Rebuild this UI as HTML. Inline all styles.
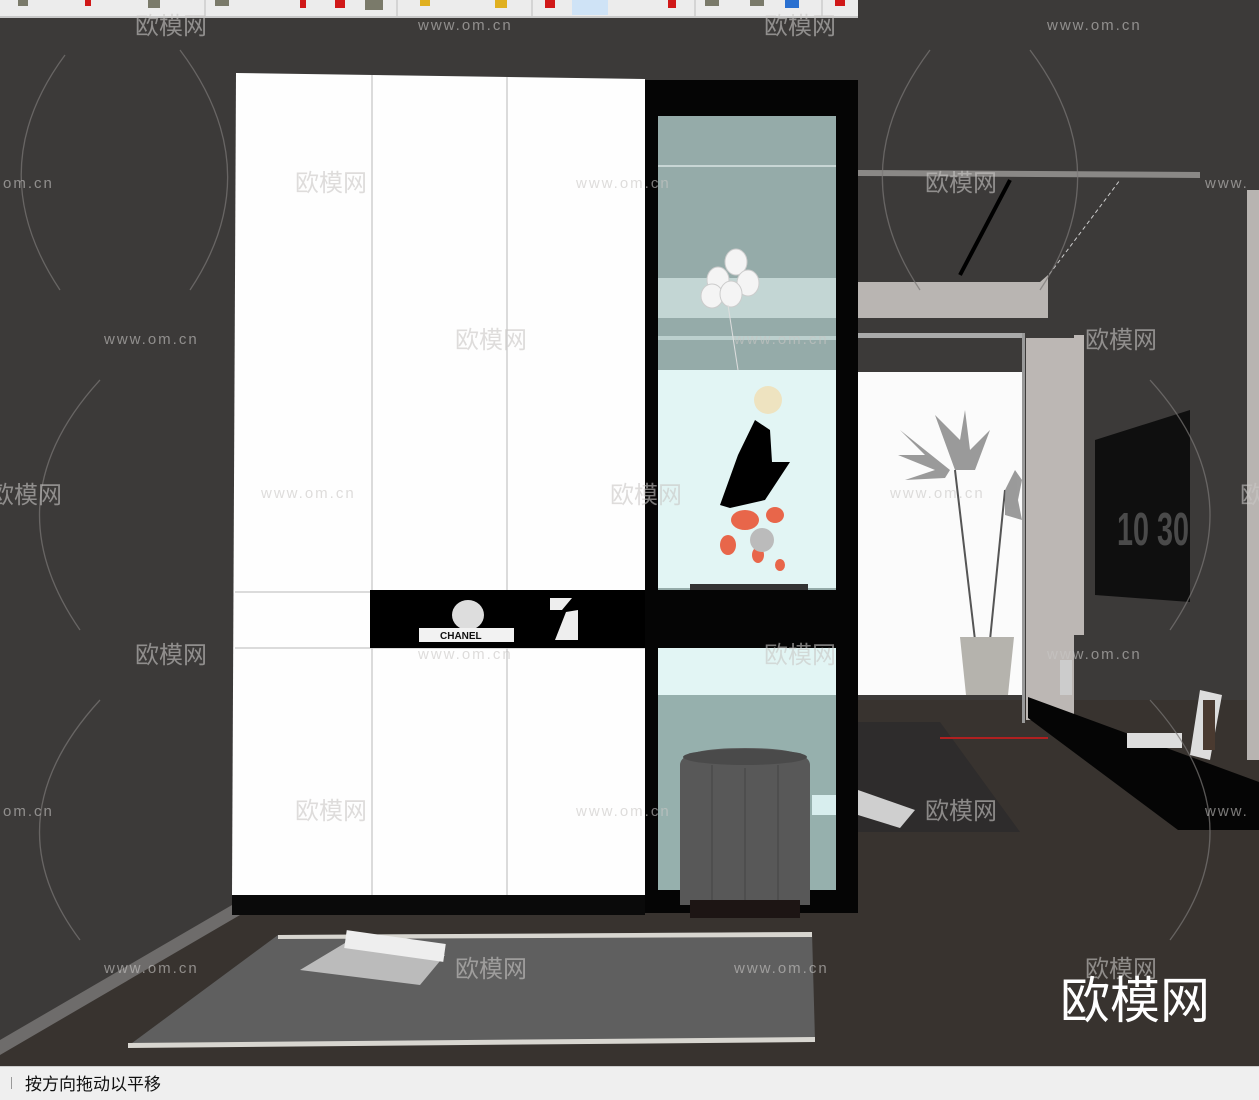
<!DOCTYPE html>
<html><head><meta charset="utf-8"><style>
html,body{margin:0;padding:0;width:1259px;height:1100px;overflow:hidden;background:#3c3a39}
svg{display:block}
text{font-family:"Liberation Sans","Noto Sans CJK SC",sans-serif}
</style></head><body>
<svg width="1259" height="1100" viewBox="0 0 1259 1100" xmlns="http://www.w3.org/2000/svg">
<rect x="0" y="0" width="1259" height="1100" fill="#3c3a39"/>
<polygon points="0,1050 232,905 645,905 858,700 1259,700 1259,1066 0,1066" fill="#38332f"/>
<polygon points="0,1040 232,905 240,915 0,1055" fill="#6e6c6b"/>
<rect x="0" y="0" width="858" height="17" fill="#ececec"/>
<rect x="0" y="16" width="858" height="2" fill="#c8c8c8"/>
<rect x="572" y="0" width="36" height="15" fill="#cfe3f6"/>
<g fill="#7a7a6a"><rect x="18" y="0" width="10" height="6"/><rect x="148" y="0" width="12" height="8"/><rect x="215" y="0" width="14" height="6"/><rect x="365" y="0" width="18" height="10"/><rect x="705" y="0" width="14" height="6"/><rect x="750" y="0" width="14" height="6"/></g>
<g fill="#d01818"><rect x="85" y="0" width="6" height="6"/><rect x="300" y="0" width="6" height="8"/><rect x="335" y="0" width="10" height="8"/><rect x="545" y="0" width="10" height="8"/><rect x="668" y="0" width="8" height="8"/><rect x="835" y="0" width="10" height="6"/></g>
<g fill="#e0b020"><rect x="420" y="0" width="10" height="6"/><rect x="495" y="0" width="12" height="8"/></g>
<rect x="785" y="0" width="14" height="8" fill="#2a70d0"/>
<g stroke="#bbb"><line x1="205" y1="0" x2="205" y2="16"/><line x1="397" y1="0" x2="397" y2="16"/><line x1="532" y1="0" x2="532" y2="16"/><line x1="695" y1="0" x2="695" y2="16"/><line x1="822" y1="0" x2="822" y2="16"/></g>

<polygon points="858,170 1200,172 1200,178 858,176" fill="#8a8886"/>
<line x1="960" y1="275" x2="1010" y2="180" stroke="#000" stroke-width="4"/>
<line x1="1045" y1="280" x2="1120" y2="180" stroke="#ccc" stroke-width="1" stroke-dasharray="4,3"/>
<polygon points="858,282 1040,282 1048,275 1048,318 858,318" fill="#b9b5b2"/>
<rect x="858" y="333" width="165" height="5" fill="#aaa"/>
<rect x="858" y="372" width="165" height="323" fill="#fbfbfb"/>
<rect x="1022" y="333" width="3" height="390" fill="#999"/>
<rect x="1026" y="338" width="48" height="382" fill="#bcb7b4"/>
<rect x="1074" y="335" width="10" height="300" fill="#bcb7b4"/>
<rect x="1247" y="190" width="12" height="570" fill="#b8b4b1"/>
<polygon points="1095,440 1190,410 1190,602 1095,595" fill="#0f0f0f"/>
<text x="1117" y="545" font-size="46" fill="#4a4a4a" font-weight="bold" textLength="72" lengthAdjust="spacingAndGlyphs">10 30</text>
<path d="M975,640 L955,470 M990,640 L1005,490" stroke="#555" stroke-width="2"/>
<g fill="#8a8a8a" opacity=".85">
<path d="M950,470 L900,430 L925,455 L898,455 L935,470 L905,480 L945,478 Z"/>
<path d="M955,470 L935,415 L960,440 L965,410 L970,450 L990,430 L975,470 Z"/>
<path d="M1005,490 L1015,470 L1022,480 L1018,500 L1022,520 L1005,515 Z"/>
</g>
<path d="M960,637 L1014,637 L1008,695 L966,695 Z" fill="#b5b3ad"/>
<polygon points="858,722 940,722 1020,832 858,832" fill="#2e2c2c"/>
<line x1="940" y1="738" x2="1048" y2="738" stroke="#b02020" stroke-width="2"/>
<polygon points="858,790 915,810 900,828 858,815" fill="#cfcfcf"/>
<polygon points="1028,697 1259,782 1259,830 1178,830 1028,718" fill="#050505"/>
<rect x="1060" y="660" width="12" height="35" fill="#ccc"/>
<polygon points="1200,690 1222,695 1210,760 1190,755" fill="#ddd"/>
<rect x="1203" y="700" width="12" height="50" fill="#4a3a30"/>
<rect x="1127" y="733" width="55" height="15" fill="#ddd"/>

<polygon points="236,73 645,79 645,895 232,895" fill="#fefefe"/>
<g stroke="#cfcfcf" stroke-width="1.5"><line x1="372" y1="75" x2="372" y2="895"/><line x1="507" y1="77" x2="507" y2="895"/><line x1="235" y1="592" x2="372" y2="592"/><line x1="235" y1="648" x2="645" y2="648"/></g>
<rect x="232" y="895" width="413" height="20" fill="#0a0a0a"/>
<rect x="370" y="590" width="487" height="58" fill="#000"/>
<ellipse cx="468" cy="615" rx="16" ry="15" fill="#ddd"/>
<rect x="419" y="628" width="95" height="14" fill="#f2f2f2"/>
<text x="440" y="639" font-size="10" font-weight="bold" fill="#111">CHANEL</text>
<polygon points="550,598 572,598 562,610 550,610" fill="#eee"/>
<polygon points="555,640 578,640 578,610 566,612" fill="#eee"/>
<rect x="645" y="80" width="213" height="833" fill="#050505"/>
<rect x="658" y="116" width="178" height="474" fill="#95aba9"/>
<rect x="658" y="165" width="178" height="2" fill="#c8d6d5"/>
<rect x="658" y="278" width="178" height="40" fill="#c3d6d4"/>
<rect x="658" y="336" width="178" height="4" fill="#bcd0ce"/>
<rect x="658" y="370" width="178" height="218" fill="#e2f5f4"/>
<rect x="690" y="584" width="118" height="6" fill="#333"/>
<g fill="#f4f4f4" stroke="#ccc"><ellipse cx="736" cy="262" rx="11" ry="13"/><ellipse cx="718" cy="280" rx="11" ry="13"/><ellipse cx="748" cy="283" rx="11" ry="13"/><ellipse cx="712" cy="296" rx="11" ry="12"/><ellipse cx="731" cy="294" rx="11" ry="13"/></g>
<line x1="728" y1="305" x2="738" y2="370" stroke="#ddd"/>
<circle cx="768" cy="400" r="14" fill="#eee3c0"/>
<polygon points="755,420 770,430 772,462 790,462 765,500 730,508 720,505 738,455" fill="#000"/>
<g fill="#e8664a"><ellipse cx="745" cy="520" rx="14" ry="10"/><ellipse cx="775" cy="515" rx="9" ry="8"/><ellipse cx="728" cy="545" rx="8" ry="10"/><ellipse cx="758" cy="555" rx="6" ry="8"/><ellipse cx="780" cy="565" rx="5" ry="6"/></g>
<ellipse cx="762" cy="540" rx="12" ry="12" fill="#bbb"/>
<rect x="658" y="648" width="178" height="242" fill="#96b0ad"/>
<rect x="658" y="648" width="178" height="47" fill="#e2f5f4"/>
<rect x="812" y="795" width="24" height="20" fill="#d8eeee"/>
<path d="M680,765 Q680,748 745,748 Q810,748 810,765 L810,905 L680,905 Z" fill="#585858"/>
<ellipse cx="745" cy="757" rx="62" ry="8" fill="#4a4a4a"/>
<g stroke="#444"><line x1="712" y1="765" x2="712" y2="900"/><line x1="745" y1="768" x2="745" y2="902"/><line x1="778" y1="765" x2="778" y2="900"/></g>
<rect x="690" y="900" width="110" height="18" fill="#1d1514"/>

<polygon points="278,935 812,932 815,1040 128,1046" fill="#5f5f5f"/>
<polygon points="278,935 812,932 812,937 278,939" fill="#d8d6d0"/>
<polygon points="128,1043 815,1037 815,1042 128,1048" fill="#d8d6d0"/>
<polygon points="300,970 350,940 445,955 420,985" fill="#bbb"/>
<rect x="345" y="937" width="100" height="18" fill="#eee" transform="rotate(8 395 946)"/>

<g fill="none" stroke="#7a7876" stroke-width="1.3" opacity=".7">
<path d="M65,55 Q-20,170 60,290"/><path d="M180,50 Q270,170 190,290"/>
<path d="M930,50 Q840,170 920,290"/><path d="M1030,50 Q1120,170 1040,290"/>
<path d="M100,380 Q-10,500 80,630"/><path d="M1150,380 Q1259,500 1170,630"/>
<path d="M100,700 Q-10,820 80,940"/><path d="M1150,700 Q1259,820 1170,940"/>
</g>
<g fill="#c9c7c5" opacity=".6" font-size="24">
<text x="135" y="34">欧模网</text><text x="764" y="34">欧模网</text>
<text x="295" y="191">欧模网</text><text x="925" y="191">欧模网</text>
<text x="455" y="348">欧模网</text><text x="1085" y="348">欧模网</text>
<text x="-10" y="503">欧模网</text><text x="610" y="503">欧模网</text><text x="1240" y="503">欧</text>
<text x="135" y="663">欧模网</text><text x="764" y="663">欧模网</text>
<text x="295" y="819">欧模网</text><text x="925" y="819">欧模网</text>
<text x="455" y="977">欧模网</text><text x="1085" y="977">欧模网</text>
</g>
<g fill="#c9c7c5" opacity=".6" font-size="15" letter-spacing="2">
<text x="418" y="30">www.om.cn</text><text x="1047" y="30">www.om.cn</text>
<text x="3" y="188">om.cn</text><text x="576" y="188">www.om.cn</text><text x="1205" y="188">www.</text>
<text x="104" y="344">www.om.cn</text><text x="734" y="344">www.om.cn</text>
<text x="261" y="498">www.om.cn</text><text x="890" y="498">www.om.cn</text>
<text x="418" y="659">www.om.cn</text><text x="1047" y="659">www.om.cn</text>
<text x="3" y="816">om.cn</text><text x="576" y="816">www.om.cn</text><text x="1205" y="816">www.</text>
<text x="104" y="973">www.om.cn</text><text x="734" y="973">www.om.cn</text>
</g>
<text x="1060" y="1018" font-size="50" fill="#fff">欧模网</text>

<rect x="0" y="1066" width="1259" height="34" fill="#efefef"/>
<rect x="0" y="1066" width="1259" height="1" fill="#ccc"/>
<rect x="11" y="1077" width="1" height="12" fill="#999"/>
<text x="25" y="1090" font-size="17" fill="#111">按方向拖动以平移</text>
</svg>
</body></html>
